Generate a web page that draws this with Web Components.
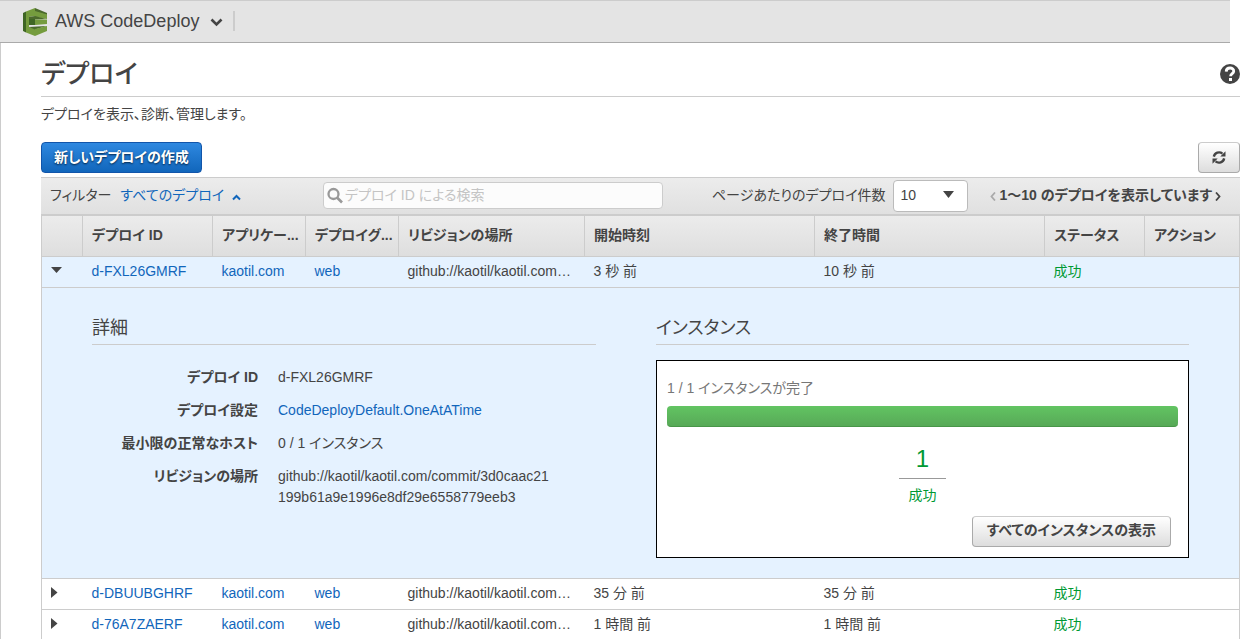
<!DOCTYPE html>
<html lang="ja">
<head>
<meta charset="utf-8">
<title>AWS CodeDeploy</title>
<style>
body {
  margin: 0;
  background: #fff;
  color: #444;
  font: 14px/20px "Liberation Sans", "Noto Sans CJK JP", sans-serif;
  font-feature-settings: "palt";
  --link: #1166bb;
  --line: #ccc;
  --ok: #009933;
}
</style>
</head>
<body>
<codedeploy-app></codedeploy-app>

<script>
const define = (name, html, setup) => {
  const tpl = document.createElement('template');
  tpl.innerHTML = html;
  customElements.define(name, class extends HTMLElement {
    constructor() {
      super();
      this.attachShadow({ mode: 'open' }).append(tpl.content.cloneNode(true));
    }
    connectedCallback() { if (setup) setup(this, this.shadowRoot); }
  });
};

define('service-header', `
<style>
  :host { display: flex; align-items: center; box-sizing: border-box; height: 43px; margin-right: 10px; padding: 0 0 2px 22px;
    background: #e4e4e4; border-top: 1px solid var(--line); border-bottom: 1px solid #aaa; }
  button { display: flex; align-items: center; padding: 0; border: 0; background: none; color: #444; font: inherit; font-size: 18px; }
  .logo { margin: 2px 7px 0 0; }
  .chev { margin: 4px 10px 0 11px; }
  i { width: 2px; height: 20px; background: var(--line); }
</style>
<button type="button" aria-haspopup="true">
  <svg class="logo" width="26" height="30" viewBox="0 0 26 30" aria-hidden="true">
    <path fill="#3f6624" d="M1 6 4 4.500V25.500L1 24Z"/>
    <path fill="#759c3e" d="M4 4.500 13 1V9L7 10V20L13 21V29L4 25.500Z"/>
    <path fill="#4b6a2c" d="M13 1 25 6V8L13 5Z"/>
    <path fill="#759c3e" d="M13 4 25 7.500V12L13 10Z"/>
    <path fill="#4b6a2c" d="M7 10 13 9 24 12 13 12.500 7 12Z"/>
    <path fill="#3f6624" d="M7 12 13 12V18L7 18Z"/>
    <path fill="#759c3e" d="M13 12.500 25 12.500V17L13 18Z"/>
    <path fill="#4b6a2c" d="M7 20 15 19.500 25 19 13 22.500Z"/>
    <path fill="#759c3e" d="M13 22 25 19V24L13 29Z"/>
  </svg>
  <span>AWS CodeDeploy</span>
  <svg class="chev" width="13" height="9" viewBox="0 0 13 9" aria-hidden="true"><path d="M1.500 1.500 6.500 6.500 11.500 1.500" fill="none" stroke="#444" stroke-width="2.600"/></svg>
</button>
<i></i>`);

define('page-title', `
<style>
  :host { display: block; }
  .row { display: flex; align-items: center; justify-content: space-between; height: 53px; border-bottom: 1px solid var(--line); }
  h1 { margin: 0; padding-top: 8px; font-size: 26px; line-height: 36px; font-weight: 500; }
  button { display: flex; padding: 8px 0 0; border: 0; background: none; }
  p { margin: 7px 0 18px; }
</style>
<div class="row">
  <h1><slot name="title"></slot></h1>
  <button type="button" aria-label="ヘルプ"><svg width="20" height="20" viewBox="0 0 20 20"><circle cx="10" cy="10" r="10" fill="#444"/><path d="M6.200 7.600C6.300 2.800 14 2.900 13.700 7.300 13.500 9.700 10.600 9.500 10.600 12.300" fill="none" stroke="#fff" stroke-width="2.800"/><path d="M9 14h3v3H9z" fill="#fff"/></svg></button>
</div>
<p><slot></slot></p>`);

define('ui-button', `
<style>
  :host { display: inline-flex; }
  button { box-sizing: border-box; height: 31px; padding: 0 14px 2px; border: 1px solid #aaa; border-top-color: #ccc; border-radius: 4px; display: flex; align-items: center;
    background: linear-gradient(#fff, #ddd); color: #444; font: inherit; font-weight: bold; font-feature-settings: inherit; white-space: nowrap; }
  :host([primary]) button { padding: 0 12px 2px; color: #fff; border-color: #1155aa; background: linear-gradient(#2e88e0, #1166bb); text-shadow: 0 1px 2px #024; }
  :host([label]) button { padding: 0 13px; }
</style>
<button type="button"><slot></slot></button>`, (el, root) => {
  if (el.hasAttribute('label')) root.querySelector('button').setAttribute('aria-label', el.getAttribute('label'));
});

define('filter-bar', `
<style>
  :host { display: flex; align-items: center; box-sizing: border-box; height: 37px; padding: 0 19px 2px 9px; background: linear-gradient(#ececec, #e0e0e0); border-top: 1px solid var(--line); white-space: nowrap; }
  .filter { flex: 0 0 273px; display: flex; align-items: center; }
  a { color: var(--link); text-decoration: none; display: flex; align-items: center; gap: 8px; margin-left: 9px; }
  a svg { margin-top: 5px; }
  .search { display: flex; align-items: center; gap: 2px; box-sizing: border-box; width: 340px; height: 27px; padding: 0 3px; background: #fcfcfc; border: 1px solid var(--line); border-radius: 4px; }
  input { flex: 1; min-width: 0; padding: 0; border: 0; background: none; font: inherit; font-feature-settings: inherit; color: #444; outline: 0; }
  input::placeholder { color: #c4c4c4; }
  .pages { display: flex; align-items: center; margin-left: auto; }
  .select { display: grid; align-items: center; margin: 1px 22px 0 8px; }
  select, .select svg { grid-area: 1 / 1; }
  .select svg { justify-self: end; margin: 0 14px 2px 0; pointer-events: none; }
  select { appearance: none; box-sizing: border-box; width: 75px; height: 32px; padding: 0 6px 2px; border: 1px solid #bbb; border-radius: 4px; background: #fff; color: #444; font: inherit; }
  nav { display: flex; align-items: center; gap: 3px; font-weight: bold; }
  nav button { display: flex; padding: 2px 0 0; border: 0; background: none; color: #444; }
  nav button:disabled { color: #aaa; }
</style>
<div class="filter">フィルター <a href="#"><span>すべてのデプロイ</span><svg width="9" height="7" viewBox="0 0 9 7" aria-hidden="true"><path d="M1 5.500 4.500 2 8 5.500" fill="none" stroke="#1166bb" stroke-width="2"/></svg></a></div>
<label class="search">
  <svg width="16" height="17" viewBox="0 0 16 17" aria-hidden="true"><circle cx="6.500" cy="7" r="5" fill="none" stroke="#999" stroke-width="2.300"/><path d="M10 10.500 15 15.500" stroke="#999" stroke-width="2.600"/></svg>
  <input type="text" placeholder="デプロイ ID による検索" aria-label="デプロイ ID による検索">
</label>
<div class="pages">
  <label for="size">ページあたりのデプロイ件数</label>
  <span class="select"><select id="size"><option>10</option><option>25</option></select><svg width="11" height="7" viewBox="0 0 11 7" aria-hidden="true"><path d="M0 0H11L5.500 7Z" fill="#444"/></svg></span>
  <nav aria-label="ページ">
    <button type="button" disabled aria-label="前へ"><svg width="6" height="9" viewBox="0 0 6 9"><path d="M5 .5 1.500 4.500 5 8.500" fill="none" stroke="currentColor" stroke-width="1.800"/></svg></button>
    <span>1～10 のデプロイを表示しています</span>
    <button type="button" aria-label="次へ"><svg width="6" height="9" viewBox="0 0 6 9"><path d="M1 .5 4.500 4.500 1 8.500" fill="none" stroke="currentColor" stroke-width="1.800"/></svg></button>
  </nav>
</div>`);

define('detail-section', `
<style>
  :host { display: block; min-width: 0; }
  h3 { margin: 0; padding-bottom: 4px; border-bottom: 1px solid var(--line); font-size: 18px; line-height: 24px; font-weight: normal; }
</style>
<h3><slot name="title"></slot></h3>
<slot></slot>`);

define('deploy-facts', `
<style>
  :host { display: block; }
  dl { display: grid; grid-template-columns: 166px minmax(0, 276px); gap: 12px 20px; margin: 22px 0 0; line-height: 21px; }
  dt { text-align: right; font-weight: bold; }
  dd { margin: 0; word-break: break-all; }
  a { color: var(--link); text-decoration: none; }
</style>
<dl>
  <dt>デプロイ ID</dt><dd>d-FXL26GMRF</dd>
  <dt>デプロイ設定</dt><dd><a href="#">CodeDeployDefault.OneAtATime</a></dd>
  <dt>最小限の正常なホスト</dt><dd>0 / 1 インスタンス</dd>
  <dt>リビジョンの場所</dt><dd>github://kaotil/kaotil.com/commit/3d0caac21199b61a9e1996e8df29e6558779eeb3</dd>
</dl>`);

define('instance-summary', `
<style>
  :host { display: block; margin-top: 15px; padding: 17px 10px 10px; border: 1px solid #000; background: #fff; }
  .text { color: #777; }
  .bar { box-sizing: border-box; height: 21px; margin-top: 8px; border-radius: 4px; border-bottom: 1px solid #489648; background: linear-gradient(#62c462, #57a957); }
  .count { display: flex; flex-direction: column; align-items: center; margin-top: 17px; color: var(--ok); }
  .count b { width: 47px; padding-bottom: 4px; border-bottom: 1px solid #999; font-size: 24px; line-height: 30px; font-weight: normal; text-align: center; }
  .count span { margin-top: 6px; }
  .actions { display: flex; justify-content: flex-end; margin: 11px 7px 0 0; }
</style>
<div class="text">1 / 1 インスタンスが完了</div>
<div class="bar" role="progressbar" aria-valuenow="100" aria-label="進行状況"></div>
<div class="count"><b>1</b><span>成功</span></div>
<div class="actions"><ui-button>すべてのインスタンスの表示</ui-button></div>`);

define('deploy-table', `
<style>
  :host { display: block; }
  table { width: 100%; table-layout: fixed; border-collapse: collapse; border: 1px solid var(--line); }
  .c0 { width: 41px } .c1 { width: 130px } .c2, .c3 { width: 93px } .c4 { width: 186px } .c7 { width: 100px } .c8 { width: 95px }
  thead tr { background: linear-gradient(#ececec, #dedede); }
  th { box-sizing: border-box; height: 41px; padding: 0 0 2px 9px; border: 1px solid var(--line); border-top-width: 2px; text-align: left; font-weight: bold; }
  td { box-sizing: border-box; height: 31px; padding: 0 0 2px 9px; border-bottom: 1px solid var(--line); }
  th, td { white-space: nowrap; }
  .open { background: #e5f2ff; }
  .detail td { padding: 28px 50px 20px; white-space: normal; vertical-align: top; }
  .grid { display: grid; grid-template-columns: minmax(0, 504fr) minmax(0, 533fr); gap: 60px; }
  a { color: var(--link); text-decoration: none; }
  td button { display: flex; padding: 0; border: 0; background: none; }
  .ok { color: var(--ok); }
</style>
<table>
  <colgroup><col class="c0"><col class="c1"><col class="c2"><col class="c3"><col class="c4"><col><col><col class="c7"><col class="c8"></colgroup>
  <thead><tr><th></th><th>デプロイ ID</th><th>アプリケー...</th><th>デプロイグ...</th><th>リビジョンの場所</th><th>開始時刻</th><th>終了時間</th><th>ステータス</th><th>アクション</th></tr></thead>
  <tbody></tbody>
</table>`, (el, root) => {
  const rows = [
    ['d-FXL26GMRF', '3 秒 前', '10 秒 前', true],
    ['d-DBUUBGHRF', '35 分 前', '35 分 前', false],
    ['d-76A7ZAERF', '1 時間 前', '1 時間 前', false]
  ];
  const arrow = open => open
    ? '<svg width="12" height="7" viewBox="0 0 12 7"><path d="M0 0H11L5.500 6Z" fill="#444"/></svg>'
    : '<svg width="7" height="11" viewBox="0 0 7 11"><path d="M0 0 6.500 5.500 0 11Z" fill="#444"/></svg>';
  const detail = `<tr class="open detail"><td colspan="9"><div class="grid">
    <detail-section><span slot="title">詳細</span><deploy-facts></deploy-facts></detail-section>
    <detail-section><span slot="title">インスタンス</span><instance-summary></instance-summary></detail-section>
  </div></td></tr>`;
  root.querySelector('tbody').innerHTML = rows.map(([id, start, end, open]) => `
    <tr class="${open ? 'open' : ''}">
      <td><button type="button" aria-expanded="${open}" aria-label="${id} の詳細">${arrow(open)}</button></td>
      <td><a href="#">${id}</a></td><td><a href="#">kaotil.com</a></td><td><a href="#">web</a></td>
      <td>github://kaotil/kaotil.com…</td><td>${start}</td><td>${end}</td><td class="ok">成功</td><td></td>
    </tr>${open ? detail : ''}`).join('');
});

define('codedeploy-app', `
<style>
  :host { display: flex; flex-direction: column; height: 100vh; overflow: hidden; }
  main { flex: 1; min-height: 0; border-left: 1px solid var(--line); padding-left: 40px; }
  .actions { display: flex; justify-content: space-between; margin-bottom: 4px; }
</style>
<service-header></service-header>
<main>
  <page-title><span slot="title">デプロイ</span>デプロイを表示、診断、管理します。</page-title>
  <div class="actions">
    <ui-button primary>新しいデプロイの作成</ui-button>
    <ui-button label="更新"><svg width="14" height="13" viewBox="0 0 12 12"><path d="M1.200 5.200A5 5 0 0 1 9.200 2.400M10.800 6.800A5 5 0 0 1 2.800 9.600" fill="none" stroke="#444" stroke-width="2.200"/><path d="M12 .2V5H7.200ZM0 11.800V7H4.800Z" fill="#444"/></svg></ui-button>
  </div>
  <filter-bar></filter-bar>
  <deploy-table></deploy-table>
</main>`);
</script>
</body>
</html>
